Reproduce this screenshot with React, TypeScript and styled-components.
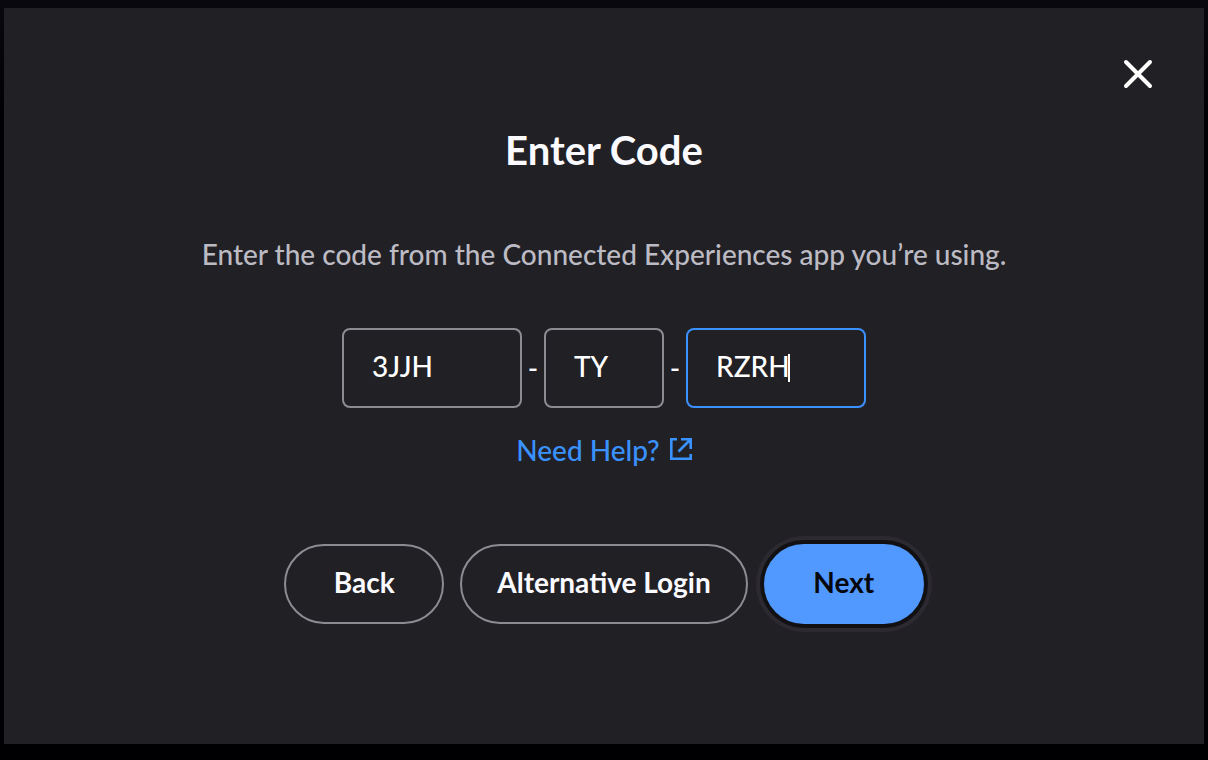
import React, { useState } from "react";
import styled, { createGlobalStyle, css } from "styled-components";

const GlobalStyle = createGlobalStyle`
  *, *::before, *::after { box-sizing: border-box; }
  body {
    margin: 0;
    background: linear-gradient(#08080e, #000004 120px, #000002);
    font-family: Lato, "Open Sans", sans-serif;
    color: #fafaff;
  }
`;

const Page = styled.div`
  min-height: 100vh;
  display: flex;
  padding: 8px 4px 16px;
`;

const Dialog = styled.main`
  flex: 1;
  display: flex;
  flex-direction: column;
  align-items: center;
  padding: 44px;
  background: #212025;
`;

const CloseButton = styled.button`
  align-self: flex-end;
  display: flex;
  align-items: center;
  justify-content: center;
  width: 44px;
  height: 44px;
  padding: 0;
  border: 0;
  background: none;
  color: #ffffff;
  cursor: pointer;
`;

const Title = styled.h1`
  margin: 30px 0 0;
  font-size: 40px;
  line-height: 48px;
  font-weight: 700;
`;

const Description = styled.p`
  margin: 62px 0 0;
  font-size: 28px;
  line-height: 36px;
  font-weight: 500;
  color: #bcbbc3;
  text-align: center;
`;

const CodeForm = styled.form`
  display: flex;
  flex-direction: column;
  align-items: center;
  margin-top: 56px;
`;

const CodeRow = styled.div`
  display: flex;
  align-items: center;
`;

const Dash = styled.span`
  width: 22px;
  font-size: 28px;
  line-height: 36px;
  font-weight: 500;
  text-align: center;
`;

const CodeCell = styled.div<{ $width: number }>`
  position: relative;
  width: ${(p) => p.$width}px;
`;

const CodeInput = styled.input`
  display: block;
  width: 100%;
  height: 80px;
  padding: 0 28px 4px;
  border: 2px solid #8d8c92;
  border-radius: 8px;
  outline: none;
  background: transparent;
  color: #ffffff;
  caret-color: transparent;
  font-family: inherit;
  font-size: 28px;
  font-weight: 500;

  &:focus {
    border-color: #3a92ff;
  }
`;

/* Mirrors the typed text so that the caret sits right behind it. */
const CaretTrack = styled.span`
  position: absolute;
  inset: 24px 0 24px 28px;
  color: transparent;
  font-size: 28px;
  font-weight: 500;
  pointer-events: none;
  display: flex;
  align-items: center;

  &::after {
    content: "";
    width: 2px;
    height: 28px;
    background: #ffffff;
  }
`;

const HelpLink = styled.a`
  display: flex;
  align-items: center;
  gap: 10px;
  margin-top: 24px;
  font-size: 28px;
  line-height: 36px;
  font-weight: 500;
  color: #3a92ff;
  text-decoration: none;
`;

const ExternalIcon = styled.svg`
  width: 22px;
  height: 22px;
  margin-bottom: 2px;
`;

const Actions = styled.div`
  display: flex;
  gap: 16px;
  margin-top: 76px;
`;

const ActionButton = styled.button<{ $primary?: boolean }>`
  height: 80px;
  min-width: 160px;
  padding: 0 35px 4px;
  border: 2px solid #8d8c92;
  border-radius: 40px;
  background: transparent;
  color: #fafaff;
  font-family: inherit;
  font-size: 28px;
  font-weight: 700;
  cursor: pointer;

  ${(p) =>
    p.$primary &&
    css`
      border-color: #5199ff;
      background: #5199ff;
      color: #06070c;
      box-shadow: 0 0 0 4px #111013, 0 0 0 8px #2c2a30;
    `}
`;

const parts = [
  { label: "Code, first part", width: 180, length: 4, value: "3JJH" },
  { label: "Code, second part", width: 120, length: 2, value: "TY" },
  { label: "Code, third part", width: 180, length: 4, value: "RZRH" },
];

export default function App() {
  const [code, setCode] = useState(parts.map((p) => p.value));
  const [focused, setFocused] = useState(2);

  const update = (index: number, value: string) =>
    setCode(code.map((c, i) => (i === index ? value.toUpperCase() : c)));

  return (
    <Page>
      <GlobalStyle />
      <Dialog aria-labelledby="title">
        <CloseButton type="button" aria-label="Close">
          <svg width="32" height="32" viewBox="0 0 32 32" fill="none" stroke="currentColor" strokeWidth="4" strokeLinecap="round">
            <path d="M4 4l24 24M28 4L4 28" />
          </svg>
        </CloseButton>
        <Title id="title">Enter Code</Title>
        <Description>Enter the code from the Connected Experiences app you’re using.</Description>
        <CodeForm onSubmit={(e) => e.preventDefault()}>
          <CodeRow>
            {parts.map((part, i) => (
              <React.Fragment key={part.label}>
                {i > 0 && <Dash>-</Dash>}
                <CodeCell $width={part.width}>
                  <CodeInput
                    type="text"
                    aria-label={part.label}
                    maxLength={part.length}
                    value={code[i]}
                    autoFocus={i === 2}
                    onFocus={() => setFocused(i)}
                    onChange={(e) => update(i, e.target.value)}
                  />
                  {focused === i && <CaretTrack aria-hidden="true">{code[i]}</CaretTrack>}
                </CodeCell>
              </React.Fragment>
            ))}
          </CodeRow>
          <HelpLink href="#help">
            Need Help?
            <ExternalIcon viewBox="0 0 22 22" fill="none" stroke="currentColor" strokeWidth="2.6" aria-hidden="true">
              <path d="M7 1.300H1.300V20.700H20.700V16M11 1.300H20.700V11M20.500 1.500L8.500 13.500" />
            </ExternalIcon>
          </HelpLink>
          <Actions>
            <ActionButton type="button">Back</ActionButton>
            <ActionButton type="button">Alternative Login</ActionButton>
            <ActionButton type="submit" $primary>
              Next
            </ActionButton>
          </Actions>
        </CodeForm>
      </Dialog>
    </Page>
  );
}
